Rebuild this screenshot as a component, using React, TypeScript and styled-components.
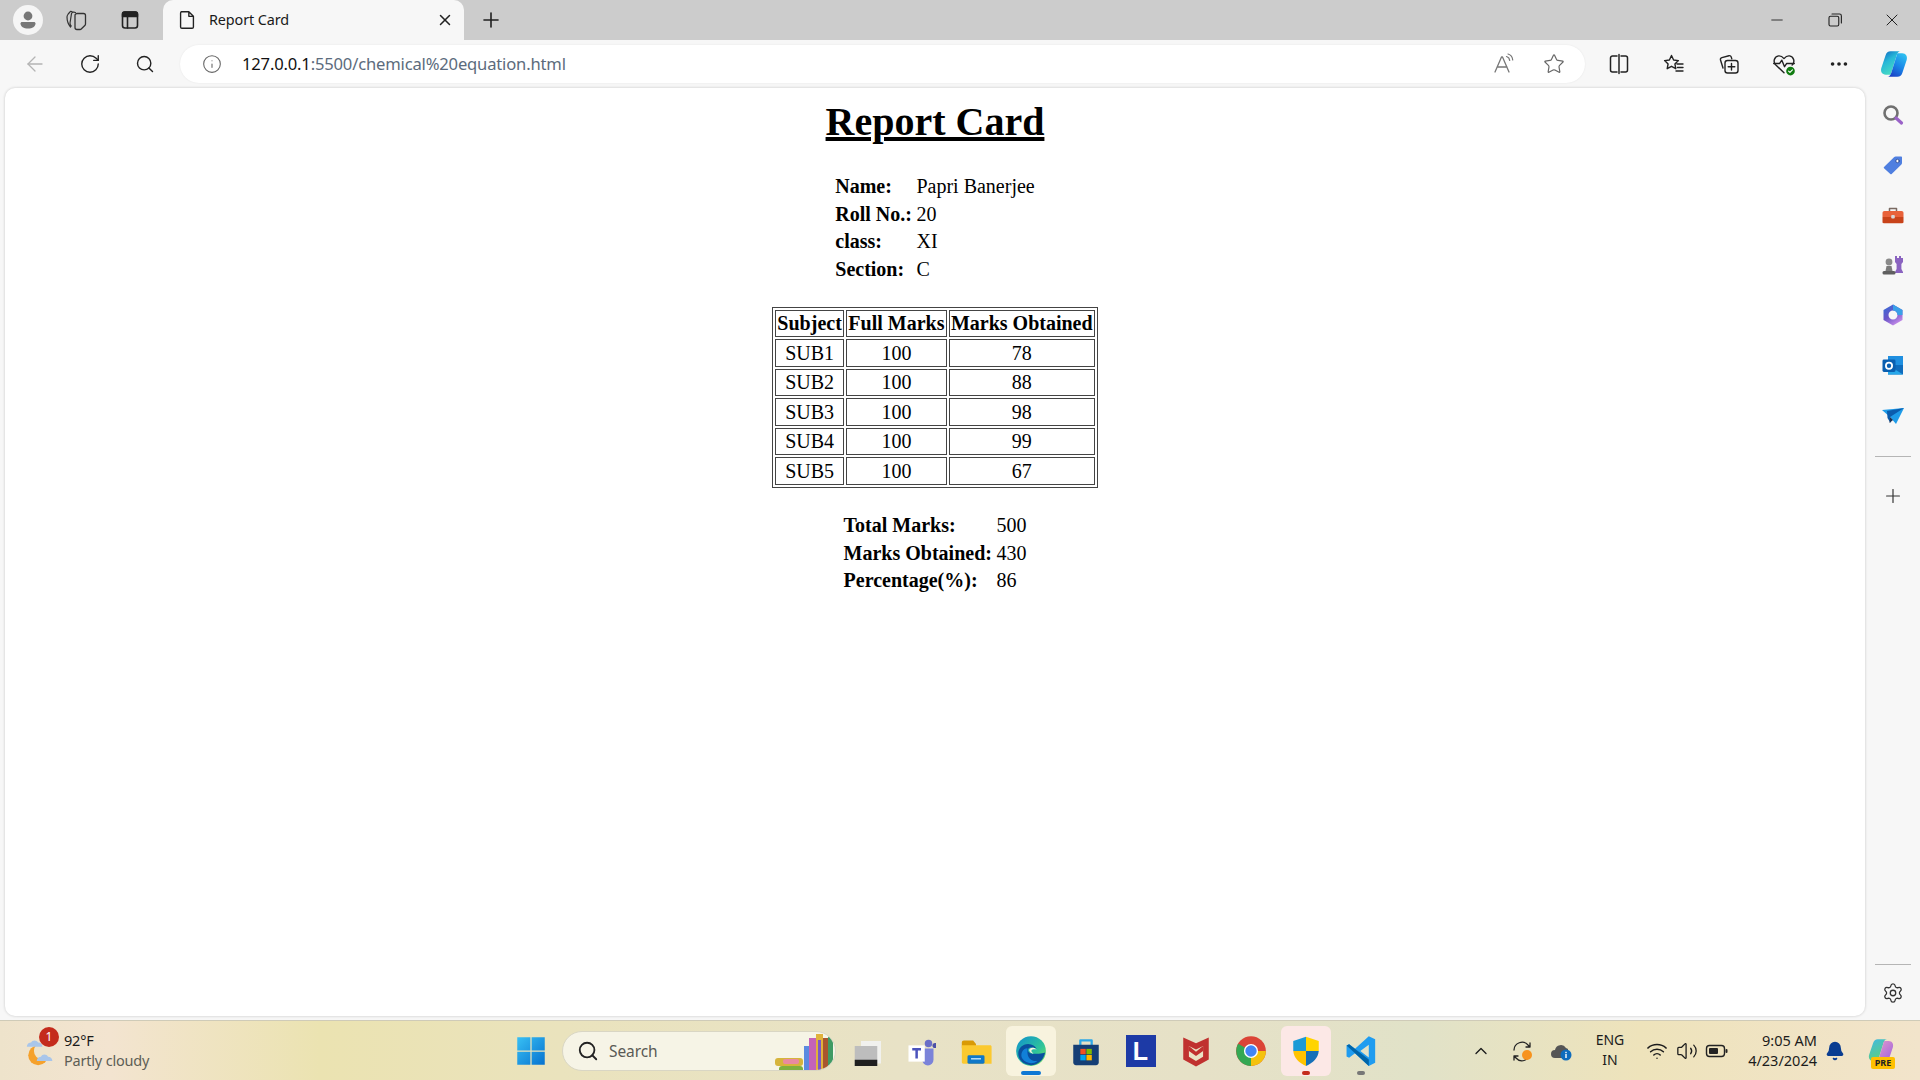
import React from 'react'
import styled, { createGlobalStyle } from 'styled-components'
import { Bell, ChevronUp, Minus, MoreHorizontal, Plus, RotateCw, Search, Star, Settings, X, ArrowLeft, Info, Wifi, Volume2 } from 'lucide-react'

const UI_FONT = `"Noto Sans", "Open Sans", sans-serif`

const GlobalStyle = createGlobalStyle`
  html, body {
    margin: 0;
    padding: 0;
    background: #f7f7f7;
  }
`

const Screen = styled.div`
  display: grid;
  grid-template-rows: 40px 48px 932px 60px;
  width: 1920px;
  height: 1080px;
  overflow: hidden;
  font-family: ${UI_FONT};
  color: #1a1a1a;
`

const TabStrip = styled.header`
  display: flex;
  align-items: center;
  background: #cccccc;
`

const StripIcon = styled.div<{ $w: number }>`
  display: flex;
  align-items: center;
  justify-content: center;
  flex: none;
  width: ${p => p.$w}px;
  height: 40px;
  color: #1f1f1f;
`

const Avatar = styled.div`
  display: flex;
  align-items: center;
  justify-content: center;
  width: 30px;
  height: 30px;
  border-radius: 50%;
  background: #f5f5f5;
`

const Tab = styled.div`
  display: flex;
  align-items: center;
  flex: none;
  width: 301px;
  height: 40px;
  margin-left: 2px;
  padding: 0 10px 0 13px;
  box-sizing: border-box;
  border-radius: 10px 10px 0 0;
  background: #f7f7f7;
`

const TabTitle = styled.span`
  flex: 1;
  margin-left: 11px;
  padding-bottom: 2px;
  font-size: 14.4px;
  letter-spacing: -0.1px;
`

const WindowControls = styled.div`
  display: flex;
  margin-left: auto;
`

const WindowButton = styled.div`
  display: flex;
  align-items: center;
  justify-content: center;
  width: 57.5px;
  height: 40px;
  color: #222;
`

const Toolbar = styled.div`
  display: flex;
  align-items: center;
  padding-left: 7px;
  background: #f7f7f7;
`

const ToolIcon = styled.div<{ $muted?: boolean }>`
  display: flex;
  align-items: center;
  justify-content: center;
  flex: none;
  width: 55px;
  height: 48px;
  color: ${p => (p.$muted ? '#b4b4b4' : '#222')};
`

const AddressBar = styled.div`
  display: flex;
  align-items: center;
  flex: none;
  width: 1405px;
  height: 38px;
  margin: 0 6px 0 8px;
  padding: 0 6px 0 22px;
  box-sizing: border-box;
  border-radius: 19px;
  background: #ffffff;
  box-shadow: 0 0 2px rgba(0, 0, 0, 0.08);
`

const Url = styled.div`
  flex: 1;
  margin-left: 20px;
  padding-bottom: 2px;
  font-size: 16.6px;
  letter-spacing: -0.18px;
  color: #5c6b7c;
  white-space: nowrap;
`

const Host = styled.span`
  color: #111;
`

const AddressIcon = styled.div`
  display: flex;
  align-items: center;
  justify-content: center;
  width: 50px;
  color: #707070;
`

const Middle = styled.div`
  display: grid;
  grid-template-columns: 1fr 56px;
  padding-left: 5px;
  background: #f7f7f7;
`

const Page = styled.main`
  height: 928px;
  padding-top: 11px;
  box-sizing: border-box;
  border-radius: 10px;
  background: #ffffff;
  box-shadow: 0 0 3px rgba(0, 0, 0, 0.2);
  color: #000;
  font-family: "Liberation Serif", "Times New Roman", serif;
  font-size: 20px;
  line-height: 23px;
`

const Title = styled.h1`
  margin: 0 0 26.8px;
  font-size: 40px;
  line-height: 46px;
  font-weight: 700;
  text-align: center;
  text-decoration: underline;
`

const InfoTable = styled.table`
  margin: 0 auto 23px;
  border-collapse: separate;
  border-spacing: 2px;

  th, td {
    padding: 1.25px;
    text-align: left;
  }
`

const MarksTable = styled.table`
  margin: 0 auto 23px;
  border: 1px solid #444;
  border-collapse: separate;
  border-spacing: 2px;

  th, td {
    padding: 1.25px;
    border: 1px solid #444;
    text-align: center;
  }
`

const SideBar = styled.aside`
  display: flex;
  flex-direction: column;
  align-items: center;
  height: 928px;
  padding-top: 2px;
  box-sizing: border-box;
`

const SideIcon = styled.div<{ $h?: number }>`
  display: flex;
  align-items: center;
  justify-content: center;
  flex: none;
  width: 55px;
  height: ${p => p.$h ?? 50}px;
  color: #333;
`

const SideRule = styled.div<{ $spaced?: boolean }>`
  flex: none;
  width: 36px;
  height: 1px;
  margin: ${p => (p.$spaced ? 'auto 0 5px' : '16px 0 14px')};
  background: #b5b5b5;
`

const TaskBar = styled.footer`
  display: flex;
  align-items: center;
  height: 60px;
  border-top: 1px solid #cfcbb8;
  box-sizing: border-box;
  background: linear-gradient(
    90deg,
    #eee3cb 0,
    #f3e4d0 110px,
    #ebe3b1 320px,
    #eae3bd 560px,
    #e8e2c6 900px,
    #e6e1c7 1200px,
    #e1e2c8 1420px,
    #eee3bb 1640px,
    #f2e4cb 1920px
  );
`

const Weather = styled.div`
  display: flex;
  align-items: center;
  position: relative;
  flex: none;
  width: 503px;
  padding-left: 24px;
  box-sizing: border-box;
`

const Badge = styled.span`
  position: absolute;
  left: 39px;
  top: -3px;
  width: 20px;
  height: 20px;
  border-radius: 50%;
  background: #c42b1c;
  color: #fff;
  font-size: 12px;
  line-height: 20px;
  text-align: center;
`

const WeatherText = styled.div`
  margin-left: 6px;
  padding-bottom: 2px;
  font-size: 14.5px;
  line-height: 20px;
  letter-spacing: -0.2px;
`

const WeatherSub = styled.div`
  color: #5e5e56;
`

const AppIcon = styled.div<{ $tint?: string }>`
  display: flex;
  align-items: center;
  justify-content: center;
  position: relative;
  flex: none;
  width: 50px;
  height: 50px;
  margin: 0 2.5px;
  border-radius: 6px;
  background: ${p => p.$tint ?? 'transparent'};
`

const RunDot = styled.span<{ $color: string; $w: number }>`
  position: absolute;
  left: 50%;
  bottom: 1px;
  width: ${p => p.$w}px;
  height: 4px;
  border-radius: 2px;
  background: ${p => p.$color};
  transform: translateX(-50%);
`

const SearchPill = styled.div`
  display: flex;
  align-items: center;
  flex: none;
  width: 274px;
  height: 40px;
  margin: 0 2px 0 4px;
  padding-left: 14px;
  box-sizing: border-box;
  border: 1px solid #d9d6c4;
  border-radius: 20px;
  background: #f6f4e6;
  color: #5a5a55;
  font-size: 15.5px;
  letter-spacing: -0.1px;
  overflow: hidden;
`

const SearchLabel = styled.span`
  flex: 1;
  margin-left: 10px;
`

const Tray = styled.div`
  display: flex;
  align-items: center;
  margin-left: auto;
  padding-right: 12px;
  color: #1c1c1c;
`

const TrayIcon = styled.div<{ $w: number }>`
  display: flex;
  align-items: center;
  justify-content: center;
  flex: none;
  position: relative;
  width: ${p => p.$w}px;
  height: 40px;
`

const PreBadge = styled.span`
  position: absolute;
  left: 18px;
  bottom: 2px;
  width: 24px;
  height: 12px;
  border-radius: 2px;
  background: #ffc000;
  color: #222;
  font-size: 9px;
  font-weight: 700;
  line-height: 12px;
  text-align: center;
`

const Lang = styled.div`
  flex: none;
  width: 66px;
  padding-bottom: 2px;
  font-size: 14px;
  line-height: 20px;
  text-align: center;
`

const Clock = styled.div`
  flex: none;
  width: 86px;
  padding-bottom: 2px;
  font-size: 14.5px;
  line-height: 20px;
  text-align: right;
`

const LLogo = styled.div`
  width: 30px;
  height: 32px;
  background: #1d3aa6;
  color: #fff;
  font-family: "Liberation Sans", Arial, sans-serif;
  font-size: 25px;
  font-weight: 700;
  line-height: 32px;
  text-align: center;
`

const Ico: React.FC<{ s?: number; children: React.ReactNode; stroke?: string; vb?: number }> = ({
  s = 24,
  stroke = 'none',
  vb = 24,
  children,
}) => (
  <svg width={s} height={s} viewBox={`0 0 ${vb} ${vb}`} fill="none" stroke={stroke} strokeWidth={1.4} strokeLinecap="round" strokeLinejoin="round">
    {children}
  </svg>
)

const sideIcons: React.ReactNode[] = [
  <Ico key="s">
    <circle cx="10" cy="10" r="6.5" stroke="#707070" strokeWidth="2.6" />
    <path d="M15 15l5.5 5" stroke="#9a62c8" strokeWidth="3.2" />
  </Ico>,
  <Ico key="t">
    <path d="M3 14 13 4.2c.5-.5 1-.7 1.6-.7H20c.6 0 1 .4 1 1v5.6c0 .5-.2 1-.6 1.4L10.700 21c-.5.4-1 .4-1.400 0L3 15.200c-.4-.4-.4-.8 0-1.200z" fill="#4f7fe0" />
    <circle cx="16.500" cy="8" r="1.700" fill="#fff" stroke="#233f88" strokeWidth="0.8" />
  </Ico>,
  <Ico key="b">
    <path d="M8.500 8V5.500h7V8" stroke="#7a6a62" strokeWidth="1.500" />
    <path d="M1.500 10c0-1.200.8-2 2-2h17c1.200 0 2 .8 2 2v4h-21z" fill="#e8623a" />
    <path d="M1.500 14h21v5c0 .8-.6 1.200-1.200 1.200H2.700c-.7 0-1.200-.4-1.200-1.200z" fill="#c8431a" />
    <rect x="10.200" y="12" width="3.600" height="3.600" rx="1" fill="#d8d8d8" />
  </Ico>,
  <Ico key="c">
    <path d="M14 3h2v2h2V3h2v2h2V3v6l-1.600 2v5l1.600 3v1h-8v-1l1.600-3v-5L14 9z" fill="#8a63c0" />
    <circle cx="8" cy="9" r="3.400" fill="#8a8a8a" />
    <path d="M5.500 13h5l1 5h-7z" fill="#7a7a7a" />
    <rect x="1.500" y="18" width="13" height="3.600" rx="1.500" fill="#5f5f5f" />
  </Ico>,
  <Ico key="m">
    <defs>
      <linearGradient id="m365" x1="0" y1="0" x2="0.6" y2="1">
        <stop offset="0" stopColor="#2f6fd8" />
        <stop offset="0.55" stopColor="#6a55c8" />
        <stop offset="1" stopColor="#c48ae8" />
      </linearGradient>
    </defs>
    <path fillRule="evenodd" d="M12 1.500 21.500 7v10L12 22.500 2.500 17V7zM12 7.500a4.500 4.500 0 100 9 4.500 4.500 0 000-9z" fill="url(#m365)" />
    <path d="M12 1.500 21.500 7v5H16.500a4.500 4.500 0 00-4.500-4.500z" fill="#3aa0e8" />
  </Ico>,
  <Ico key="o">
    <rect x="7" y="3" width="15" height="9" fill="#1f8fe0" />
    <path d="M7 12h15v9.500H7z" fill="#0f6cbd" />
    <path d="M7 12l15 9.500H7z" fill="#28a8ea" />
    <rect x="1.500" y="6.500" width="13" height="12.500" rx="1.400" fill="#0a5fb0" />
    <circle cx="8" cy="12.800" r="3.100" stroke="#fff" strokeWidth="1.800" />
  </Ico>,
  <Ico key="p">
    <path d="M1 7 23 5 15 21 9 14z" fill="#1e9be8" />
    <path d="M6 8 23 5 9 14 9.500 20l-3-5z" fill="#0b5cad" />
    <path d="M9 14l-.5 6L12 17z" fill="#1b2f52" />
  </Ico>,
]

const App: React.FC = () => (
  <Screen>
    <GlobalStyle />
    <TabStrip>
      <StripIcon $w={55}>
        <Avatar>
          <Ico s={24}>
            <circle cx="12" cy="8" r="4.400" fill="#777" />
            <path d="M4.500 15.500c0-1 .6-1.600 1.600-1.600h11.800c1 0 1.600.6 1.600 1.600 0 3-3.200 5-7.500 5s-7.500-2-7.500-5z" fill="#777" />
          </Ico>
        </Avatar>
      </StripIcon>
      <StripIcon $w={44}>
        <Ico stroke="#333">
          <path d="M10.500 4.500 8.800 4.200a2 2 0 00-2.300 1.500L5 15c0 1.200.4 2.200 1.200 3M7 3.500 5.500 3.300 3.200 6c-.8 1-1.200 2-1.200 3 0 3 1 7 3.500 10" strokeWidth="1.200" />
          <path d="M12 5.500h6.500c1 0 2 .8 2 2V16c0 .6-.2 1.100-.7 1.500l-3.300 3.300c-.4.400-.9.700-1.500.7H12c-1 0-2-.9-2-2v-12c0-1.100 1-2 2-2z" strokeWidth="1.300" />
        </Ico>
      </StripIcon>
      <StripIcon $w={62}>
        <Ico stroke="#222">
          <rect x="4.500" y="4" width="15" height="16" rx="2.500" strokeWidth="1.600" />
          <path d="M4.500 8.500h15V6c0-1-.8-2-2-2h-11c-1.200 0-2 1-2 2z" fill="#222" />
          <path d="M9.500 8.500V20" strokeWidth="1.600" />
        </Ico>
      </StripIcon>
      <Tab>
        <Ico s={22} stroke="#222">
          <path d="M6 3h8l5 5v11.500a1.500 1.500 0 01-1.500 1.500h-11A1.500 1.500 0 015 19.500v-15A1.500 1.500 0 016 3zM14 3v5h5" strokeWidth="1.500" />
        </Ico>
        <TabTitle>Report Card</TabTitle>
        <X size={18} strokeWidth={2} color="#222" />
      </Tab>
      <StripIcon $w={54}>
        <Plus size={24} strokeWidth={1.6} />
      </StripIcon>
      <WindowControls>
        <WindowButton>
          <Minus size={18} strokeWidth={1.2} />
        </WindowButton>
        <WindowButton>
          <Ico s={18} stroke="#222">
            <rect x="4" y="7" width="13" height="13" rx="2" strokeWidth="1.500" />
            <path d="M8 4h10a2.500 2.500 0 012.500 2.500V16" strokeWidth="1.500" />
          </Ico>
        </WindowButton>
        <WindowButton>
          <X size={20} strokeWidth={1.2} />
        </WindowButton>
      </WindowControls>
    </TabStrip>

    <Toolbar>
      <ToolIcon $muted>
        <ArrowLeft size={24} strokeWidth={1.3} />
      </ToolIcon>
      <ToolIcon>
        <RotateCw size={22} strokeWidth={1.5} />
      </ToolIcon>
      <ToolIcon>
        <Search size={20} strokeWidth={1.7} />
      </ToolIcon>
      <AddressBar>
        <Info size={20} strokeWidth={1.3} color="#666" />
        <Url>
          <Host>127.0.0.1</Host>:5500/chemical%20equation.html
        </Url>
        <AddressIcon>
          <Ico stroke="#777">
            <path d="M3 20 9.500 5h1L17 20M5.500 15h9.500" strokeWidth="1.300" />
            <path d="M14.500 4.500c2 .6 3 2 3.200 4M16 2c3 .8 4.500 3 4.700 6" strokeWidth="1.200" />
          </Ico>
        </AddressIcon>
        <AddressIcon>
          <Star size={22} strokeWidth={1.3} color="#666" />
        </AddressIcon>
      </AddressBar>
      <ToolIcon>
        <Ico stroke="#222">
          <path d="M10 4H5.500A2 2 0 003.500 6v12a2 2 0 002 2H10M14 4h4.500a2 2 0 012 2v12a2 2 0 01-2 2H14M12 2.500v19" strokeWidth="1.500" />
        </Ico>
      </ToolIcon>
      <ToolIcon>
        <Ico stroke="#222">
          <path d="M9.500 3.500 11.600 8l4.800.6-3.500 3.300.9 4.800-4.300-2.400-4.300 2.400.9-4.800L2.600 8.600 7.400 8zM15 12h6M15.500 15.500H21M14 19h7" strokeWidth="1.400" />
        </Ico>
      </ToolIcon>
      <ToolIcon>
        <Ico stroke="#222">
          <path d="M6 16 3.500 8a2 2 0 011.400-2.400l7-1.900c1-.2 2 .3 2.300 1.200l.6 2" strokeWidth="1.400" />
          <rect x="8" y="8.500" width="13" height="12.500" rx="2.500" strokeWidth="1.400" />
          <path d="M14.500 11.500v6.500M11.200 14.700h6.600" strokeWidth="1.400" />
        </Ico>
      </ToolIcon>
      <ToolIcon>
        <Ico s={26} stroke="#222">
          <path d="M12 20 4.500 13c-3-3-1.500-8 2.500-8.500 2-.2 3.500.7 5 2.500 1.500-1.800 3-2.700 5-2.500 4 .5 5.500 5.500 2.500 8.500" strokeWidth="1.300" />
          <path d="M2.500 11.500H8l2-3 2.500 6 2-3h7" strokeWidth="1.300" />
          <circle cx="18" cy="18.500" r="4" fill="#107c10" stroke="none" />
          <path d="M16.200 18.500l1.300 1.300 2.300-2.400" stroke="#fff" strokeWidth="1" />
        </Ico>
      </ToolIcon>
      <ToolIcon>
        <MoreHorizontal size={22} strokeWidth={2} />
      </ToolIcon>
      <ToolIcon>
        <Ico s={32}>
          <defs>
            <linearGradient id="cop1" x1="0" y1="0" x2="0.6" y2="1">
              <stop offset="0" stopColor="#0f5fc0" />
              <stop offset="0.45" stopColor="#27b8d8" />
              <stop offset="1" stopColor="#4de0c0" />
            </linearGradient>
            <linearGradient id="cop2" x1="0.2" y1="1" x2="0.8" y2="0">
              <stop offset="0" stopColor="#1a3fc4" />
              <stop offset="0.5" stopColor="#1a86e8" />
              <stop offset="1" stopColor="#2ec0f0" />
            </linearGradient>
          </defs>
          <path d="M9.500 2.500c-2 0-3.200 1.200-3.800 3L2.500 15c-.8 2.600.6 5 3.300 5h3.700L14 5.500c.5-1.700 1.300-3 3-3z" fill="url(#cop1)" />
          <path d="M14.500 21.500c2 0 3.200-1.200 3.800-3L21.500 9c.8-2.600-.6-5-3.300-5h-3.700L10 18.500c-.5 1.700-1.300 3-3 3z" fill="url(#cop2)" />
        </Ico>
      </ToolIcon>
    </Toolbar>

    <Middle>
      <Page>
        <Title>Report Card</Title>
        <InfoTable>
          <tbody>
            <tr><th>Name:</th><td>Papri Banerjee</td></tr>
            <tr><th>Roll No.:</th><td>20</td></tr>
            <tr><th>class:</th><td>XI</td></tr>
            <tr><th>Section:</th><td>C</td></tr>
          </tbody>
        </InfoTable>
        <MarksTable>
          <tbody>
            <tr><th>Subject</th><th>Full Marks</th><th>Marks Obtained</th></tr>
            <tr><td>SUB1</td><td>100</td><td>78</td></tr>
            <tr><td>SUB2</td><td>100</td><td>88</td></tr>
            <tr><td>SUB3</td><td>100</td><td>98</td></tr>
            <tr><td>SUB4</td><td>100</td><td>99</td></tr>
            <tr><td>SUB5</td><td>100</td><td>67</td></tr>
          </tbody>
        </MarksTable>
        <InfoTable>
          <tbody>
            <tr><th>Total Marks:</th><td>500</td></tr>
            <tr><th>Marks Obtained:</th><td>430</td></tr>
            <tr><th>Percentage(%):</th><td>86</td></tr>
          </tbody>
        </InfoTable>
      </Page>
      <SideBar>
        {sideIcons.map((icon, i) => (
          <SideIcon key={i}>{icon}</SideIcon>
        ))}
        <SideRule />
        <SideIcon>
          <Plus size={22} strokeWidth={1.3} />
        </SideIcon>
        <SideRule $spaced />
        <SideIcon $h={46}>
          <Settings size={22} strokeWidth={1.4} />
        </SideIcon>
      </SideBar>
    </Middle>

    <TaskBar>
      <Weather>
        <Ico s={34}>
          <circle cx="10" cy="15" r="7" fill="#f5a12c" />
          <circle cx="13" cy="12" r="6" fill="#eee3cb" />
          <path d="M2 9c0-2 1.500-3 3-3 .8-2 4-2 5 0 1.800 0 3 1.200 3 3z" fill="#a9c6ea" />
          <path d="M9 19c0-2 1.500-3 3-3 .8-2 4-2 5 0 1.800 0 3 1.200 3 3z" fill="#a9c6ea" />
        </Ico>
        <Badge>1</Badge>
        <WeatherText>
          <div>92°F</div>
          <WeatherSub>Partly cloudy</WeatherSub>
        </WeatherText>
      </Weather>

      <AppIcon>
        <Ico s={30}>
          <defs>
            <linearGradient id="win" x1="0" y1="0" x2="1" y2="1">
              <stop offset="0" stopColor="#38c0f4" />
              <stop offset="1" stopColor="#0672cf" />
            </linearGradient>
          </defs>
          <path d="M1 1h10.500v10.500H1zM12.500 1H23v10.500H12.500zM1 12.500h10.500V23H1zM12.500 12.500H23V23H12.500z" fill="url(#win)" />
        </Ico>
      </AppIcon>

      <SearchPill>
        <Search size={22} strokeWidth={2} color="#222" />
        <SearchLabel>Search</SearchLabel>
        <Ico s={62} vb={62}>
          <rect x="2" y="38" width="28" height="8" rx="3" fill="#d6b43c" />
          <rect x="6" y="46" width="24" height="9" rx="3" fill="#7fb03e" />
          <rect x="10" y="39" width="16" height="5" rx="2" fill="#e98aa0" />
          <rect x="31" y="26" width="5" height="30" fill="#5b8ae0" />
          <rect x="36" y="18" width="7" height="38" fill="#c463b8" />
          <rect x="43" y="14" width="7" height="42" fill="#e0b23c" />
          <rect x="45" y="20" width="3" height="30" fill="#7b58c8" />
          <rect x="50" y="18" width="5" height="38" fill="#a8562e" />
          <rect x="55" y="16" width="5" height="38" rx="2" fill="#3f9a64" />
        </Ico>
      </SearchPill>

      <AppIcon>
        <Ico s={30}>
          <rect x="8" y="4" width="20" height="18" fill="#f1f1ee" />
          <rect x="3" y="8" width="18" height="18" fill="#bdbdbd" />
          <rect x="3" y="19" width="18" height="7" fill="#1f1f1f" />
        </Ico>
      </AppIcon>
      <AppIcon>
        <Ico s={30}>
          <circle cx="18" cy="6" r="3" fill="#6b6fc8" />
          <circle cx="24.500" cy="8" r="2.200" fill="#4c50a8" transform="scale(.95)" />
          <path d="M13 10h9v9a4.500 4.500 0 01-9 0z" fill="#7b83d9" />
          <rect x="2" y="7.500" width="13" height="13" fill="#fff" />
          <path d="M5 10.500h7M8.500 10.500V18" stroke="#4b53bc" strokeWidth="2" strokeLinecap="butt" />
        </Ico>
      </AppIcon>
      <AppIcon>
        <Ico s={34}>
          <path d="M2 6c0-1 .5-1.500 1.500-1.500H10L12 7v3H2z" fill="#d99a06" />
          <path d="M2 8h20c.6 0 1 .5 1 1v12H3c-.6 0-1-.4-1-1z" fill="#fbc92f" />
          <rect x="6" y="15" width="12" height="6" rx="1" fill="#0f78c8" />
          <rect x="8.500" y="17" width="7" height="1" fill="#bfe3fb" />
        </Ico>
      </AppIcon>
      <AppIcon $tint="#f8f3de">
        <Ico s={34}>
          <defs>
            <linearGradient id="edge1" x1="0" y1="0" x2="1" y2="1">
              <stop offset="0" stopColor="#0f8fd0" />
              <stop offset="0.6" stopColor="#2fc49a" />
              <stop offset="1" stopColor="#7fe05a" />
            </linearGradient>
          </defs>
          <circle cx="12" cy="12" r="10.500" fill="url(#edge1)" />
          <path d="M3 14c0-4 3-7 7-7 3 0 5 1.500 6 3.500-2-1-5-1.500-6 0-.8 1.500 1 3.500 4 3.500 3 0 7-.5 8-1-1 5-5 9-10 9-5.500 0-9-4-9-8z" fill="#0a4f9e" />
          <path d="M9.500 13c0 4 3 6.500 7 6-3 2.500-8 2-10.500-1.500C4 14.500 6 10 9.500 10z" fill="#1180d8" />
          <path d="M11 10.500c1.500-1.200 3.800-.8 5 .5-1.600-.3-3.400-.2-3.700.7-.2.8.5 1.500 1.500 2-1.800 0-3.800-1.700-2.800-3.200z" fill="#f8f3de" />
        </Ico>
        <RunDot $color="#0f78d4" $w={20} />
      </AppIcon>
      <AppIcon>
        <Ico s={34}>
          <path d="M8 8V4.500h8V8" stroke="#2ea8e8" strokeWidth="1.600" />
          <path d="M3 7.500h18V20a2 2 0 01-2 2H5a2 2 0 01-2-2z" fill="#153e75" />
          <rect x="8" y="10.500" width="3.800" height="3.800" fill="#f25022" />
          <rect x="12.300" y="10.500" width="3.800" height="3.800" fill="#7fba00" />
          <rect x="8" y="14.800" width="3.800" height="3.800" fill="#00a4ef" />
          <rect x="12.300" y="14.800" width="3.800" height="3.800" fill="#ffb900" />
        </Ico>
      </AppIcon>
      <AppIcon>
        <LLogo>L</LLogo>
      </AppIcon>
      <AppIcon>
        <Ico s={34}>
          <path d="M3 2.500 12 6.500l9-4V18l-9 5-9-5z" fill="#c0312f" />
          <path d="M7 8.500 12 11l5-2.500v7.500l-5 3-5-3z" fill="#eae3c6" />
          <path d="M7 8.500 12 12.500l5-4V12l-5 3.500L7 12z" fill="#c0312f" />
        </Ico>
      </AppIcon>
      <AppIcon>
        <Ico s={34}>
          <circle cx="12" cy="12" r="10.500" fill="#db4437" />
          <path d="M12 12 22.500 12A10.500 10.500 0 0 1 12 22.500z" fill="#f4c20d" />
          <path d="M12 12 12 22.500A10.500 10.500 0 0 1 2.900 6.800z" fill="#34a853" />
          <circle cx="12" cy="12" r="5" fill="#fff" />
          <circle cx="12" cy="12" r="4" fill="#4285f4" />
        </Ico>
      </AppIcon>
      <AppIcon $tint="#fce8e6">
        <Ico s={34}>
          <path d="M12 2 3 5v7h9z" fill="#1b9ad6" />
          <path d="M12 2l9 3v7h-9z" fill="#ffd400" />
          <path d="M3 12h9v10.500C7 20.500 3.500 17 3 12z" fill="#ffc300" />
          <path d="M21 12h-9v10.500c5-2 8.500-5.500 9-10.500z" fill="#1570b8" />
        </Ico>
        <RunDot $color="#c42b1c" $w={8} />
      </AppIcon>
      <AppIcon>
        <Ico s={34}>
          <path d="M17.500 1.500 22 3.700v16.600l-4.500 2.200L7.800 13.600 3.600 16.800 1.800 15.900v-7.800l1.800-.9 4.200 3.200zM17.500 7.500l-6 4.500 6 4.500z" fill="#1f9cf0" />
          <path d="M1.800 8.100 3.600 7.200 17.500 18v4.500L1.800 8.100z" fill="#0065a9" />
        </Ico>
        <RunDot $color="#777" $w={8} />
      </AppIcon>

      <Tray>
        <TrayIcon $w={36}>
          <ChevronUp size={20} strokeWidth={1.6} />
        </TrayIcon>
        <TrayIcon $w={46}>
          <Ico>
            <path d="M4 11a8 8 0 0 1 14-5l2 2M20 4v4h-4M20 14a8 8 0 0 1-14 5l-2-2M4 21v-4h4" stroke="#222" strokeWidth="1.300" />
            <circle cx="17" cy="16" r="5" fill="#f7931e" />
          </Ico>
        </TrayIcon>
        <TrayIcon $w={32}>
          <Ico>
            <path d="M6 19a4 4 0 010-8 6 6 0 0111-2 5 5 0 012 1v9z" fill="#555" />
            <circle cx="17" cy="16" r="5.500" fill="#0f6cbd" />
            <rect x="16.300" y="15" width="1.400" height="4" fill="#fff" />
            <rect x="16.300" y="12.800" width="1.400" height="1.400" fill="#fff" />
          </Ico>
        </TrayIcon>
        <Lang>
          ENG
          <br />
          IN
        </Lang>
        <TrayIcon $w={28}>
          <Wifi size={22} strokeWidth={1.6} />
        </TrayIcon>
        <TrayIcon $w={32}>
          <Volume2 size={22} strokeWidth={1.4} />
        </TrayIcon>
        <TrayIcon $w={28}>
          <Ico>
            <rect x="1.500" y="6.500" width="18" height="11" rx="3" stroke="#222" strokeWidth="1.400" />
            <rect x="4" y="9" width="9" height="6" rx="1" fill="#222" />
            <rect x="20.500" y="10" width="2" height="4" rx="1" fill="#222" />
          </Ico>
        </TrayIcon>
        <Clock>
          9:05 AM
          <br />
          4/23/2024
        </Clock>
        <TrayIcon $w={36}>
          <Bell size={20} fill="#0a3d91" color="#0a3d91" />
        </TrayIcon>
        <TrayIcon $w={56}>
          <Ico s={30}>
            <defs>
              <linearGradient id="cop3" x1="0" y1="0" x2="0.5" y2="1">
                <stop offset="0" stopColor="#3fb8e8" />
                <stop offset="1" stopColor="#5fd07a" />
              </linearGradient>
              <linearGradient id="cop4" x1="0" y1="0" x2="1" y2="1">
                <stop offset="0" stopColor="#e8a0c8" />
                <stop offset="1" stopColor="#9a5ce0" />
              </linearGradient>
            </defs>
            <path d="M9.500 2.500c-2 0-3.200 1.200-3.800 3L2.500 15c-.8 2.600.6 5 3.300 5h3.700L14 5.500c.5-1.700 1.300-3 3-3z" fill="url(#cop3)" />
            <path d="M14.500 21.500c2 0 3.200-1.200 3.800-3L21.500 9c.8-2.600-.6-5-3.300-5h-3.700L10 18.500c-.5 1.700-1.300 3-3 3z" fill="url(#cop4)" />
          </Ico>
          <PreBadge>PRE</PreBadge>
        </TrayIcon>
      </Tray>
    </TaskBar>
  </Screen>
)

export default App
